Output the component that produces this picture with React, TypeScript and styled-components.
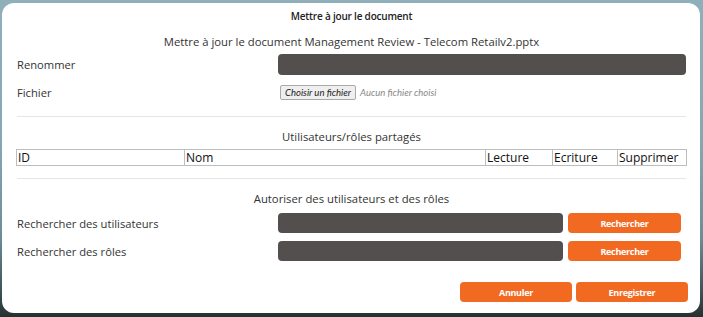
import styled, { createGlobalStyle } from 'styled-components'

const Global = createGlobalStyle`
  html, body {
    margin: 0;
    padding: 0;
    height: 317px;
    overflow: hidden;
  }
  body {
    font-family: 'Open Sans', 'Liberation Sans', sans-serif;
    background: linear-gradient(
      180deg,
      #8fb0bb 0%,
      #86a7b2 45%,
      #6c8c96 75%,
      #3f5257 92%,
      #25302f 100%
    );
  }
`

const S = {
  Modal: styled.div`
    margin: 3px 0 0 2px;
    width: 698px;
    height: 310px;
    box-sizing: border-box;
    background: #fff;
    border-radius: 12px;
    padding: 5px 14px 0 15px;
    display: flex;
    flex-direction: column;
    color: #333;
  `,
  Title: styled.div`
    text-align: center;
    font-size: 10px;
    line-height: 16px;
    font-weight: 600;
    letter-spacing: -0.2px;
    color: #222;
  `,
  Heading: styled.div<{ $top: number }>`
    margin-top: ${p => p.$top}px;
    text-align: center;
    font-size: 11.3px;
    line-height: 18px;
    color: #333;
  `,
  Row: styled.div<{ $top: number; $h: number }>`
    margin-top: ${p => p.$top}px;
    height: ${p => p.$h}px;
    display: grid;
    grid-template-columns: 261px 1fr;
    align-items: center;
  `,
  Label: styled.div`
    font-size: 11.2px;
    color: #333;
  `,
  Input: styled.div`
    height: 21px;
    background: #544f4f;
    border-radius: 4px;
  `,
  SearchGroup: styled.div`
    display: flex;
    gap: 5px;
    height: 20px;
  `,
  SearchInput: styled.div`
    width: 285px;
    height: 20px;
    background: #544f4f;
    border-radius: 4px;
  `,
  File: styled.div`
    display: flex;
    align-items: center;
    gap: 4px;
    padding-left: 2px;
    font-family: Lato, 'Liberation Sans', sans-serif;
    font-style: italic;
    font-size: 9.5px;
  `,
  FileButton: styled.span`
    height: 15px;
    box-sizing: border-box;
    padding: 0 4px;
    display: flex;
    align-items: center;
    border: 1px solid #a9a9a9;
    border-radius: 2px;
    background: #efefef;
    color: #222;
  `,
  NoFile: styled.span`
    color: #888;
  `,
  Rule: styled.hr<{ $top: number }>`
    margin: ${p => p.$top}px 0 0 0;
    border: none;
    border-top: 1px solid #e6e6e6;
    height: 0;
  `,
  Table: styled.table`
    margin-top: 3px;
    margin-left: -1px;
    width: 670px;
    border-collapse: collapse;
    table-layout: fixed;
    font-size: 12px;
    color: #111;
  `,
  Th: styled.th`
    height: 15px;
    padding: 0 1px;
    border: 1px solid #bdbdbd;
    text-align: left;
    font-weight: 500;
    line-height: 15px;
    white-space: nowrap;
    overflow: hidden;
  `,
  OrangeButton: styled.button<{ $w: number }>`
    width: ${p => p.$w}px;
    height: 20px;
    border: none;
    border-radius: 4px;
    background: #f26a22;
    color: #fff;
    font-family: 'Open Sans', 'Liberation Sans', sans-serif;
    font-size: 9px;
    font-weight: 700;
    letter-spacing: -0.3px;
    padding: 0;
  `,
  Footer: styled.div`
    margin-top: 21px;
    margin-right: -2px;
    display: flex;
    justify-content: flex-end;
    gap: 4px;
  `
}

const columns = [
  { name: 'ID', w: 168 },
  { name: 'Nom', w: 301 },
  { name: 'Lecture', w: 67 },
  { name: 'Ecriture', w: 65 },
  { name: 'Supprimer', w: 69 }
]

export default function App() {
  return (
    <>
      <Global />
      <S.Modal>
        <S.Title>Mettre à jour le document</S.Title>
        <S.Heading $top={9}>
          Mettre à jour le document Management Review - Telecom Retailv2.pptx
        </S.Heading>

        <S.Row $top={3} $h={21}>
          <S.Label>Renommer</S.Label>
          <S.Input />
        </S.Row>
        <S.Row $top={8} $h={19}>
          <S.Label>Fichier</S.Label>
          <S.File>
            <S.FileButton>Choisir un fichier</S.FileButton>
            <S.NoFile>Aucun fichier choisi</S.NoFile>
          </S.File>
        </S.Row>

        <S.Rule $top={14} />
        <S.Heading $top={11}>Utilisateurs/rôles partagés</S.Heading>
        <S.Table>
          <colgroup>
            {columns.map(c => (
              <col key={c.name} style={{ width: c.w }} />
            ))}
          </colgroup>
          <thead>
            <tr>
              {columns.map(c => (
                <S.Th key={c.name}>{c.name}</S.Th>
              ))}
            </tr>
          </thead>
        </S.Table>

        <S.Rule $top={12} />
        <S.Heading $top={11}>Autoriser des utilisateurs et des rôles</S.Heading>
        <S.Row $top={5} $h={20}>
          <S.Label>Rechercher des utilisateurs</S.Label>
          <S.SearchGroup>
            <S.SearchInput />
            <S.OrangeButton $w={113}>Rechercher</S.OrangeButton>
          </S.SearchGroup>
        </S.Row>
        <S.Row $top={8} $h={20}>
          <S.Label>Rechercher des rôles</S.Label>
          <S.SearchGroup>
            <S.SearchInput />
            <S.OrangeButton $w={113}>Rechercher</S.OrangeButton>
          </S.SearchGroup>
        </S.Row>

        <S.Footer>
          <S.OrangeButton $w={112}>Annuler</S.OrangeButton>
          <S.OrangeButton $w={112}>Enregistrer</S.OrangeButton>
        </S.Footer>
      </S.Modal>
    </>
  )
}
